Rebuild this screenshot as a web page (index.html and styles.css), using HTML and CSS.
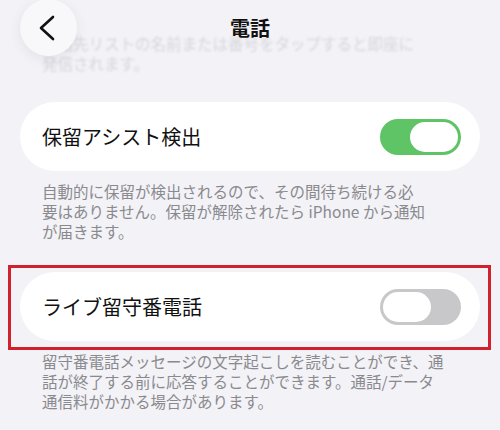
FILE: index.html
```html
<!DOCTYPE html>
<html lang="ja">
<head>
<meta charset="utf-8">
<link rel="stylesheet" href="styles.css">
</head>
<body>
<div class="screen">
  <header class="navbar">
    <button class="back" aria-label="戻る">
      <svg width="20" height="26" viewBox="0 0 20 26"><path d="M15 2 L3 13 L15 24" fill="none" stroke="#111" stroke-width="2.6" stroke-linecap="round" stroke-linejoin="round"/></svg>
    </button>
    <h1 class="title">電話</h1>
  </header>

  <p class="footer faded">連絡先リストの名前または番号をタップすると即座に<br>発信されます。</p>

  <div class="card first">
    <span class="label">保留アシスト検出</span>
    <span class="toggle on"><span class="knob"></span></span>
  </div>
  <p class="footer">自動的に保留が検出されるので、その間待ち続ける必<br>要はありません。保留が解除されたら iPhone から通知<br>が届きます。</p>

  <div class="card second highlight">
    <span class="label">ライブ留守番電話</span>
    <span class="toggle off"><span class="knob"></span></span>
  </div>
  <p class="footer">留守番電話メッセージの文字起こしを読むことができ、通<br>話が終了する前に応答することができます。通話/データ<br>通信料がかかる場合があります。</p>
</div>
</body>
</html>
```

FILE: styles.css
```css
* { box-sizing: border-box; }
html, body {
  margin: 0;
  padding: 0;
  background: #f2f2f7;
}
body {
  width: 500px;
  height: 430px;
  overflow: hidden;
  font-family: "Noto Sans CJK JP", "Noto Sans", sans-serif;
}
.screen {
  position: relative;
  padding: 33px 20px 0 20px;
}
.navbar {
  position: absolute;
  top: 0;
  left: 0;
  right: 0;
  height: 56px;
  z-index: 2;
}
.back {
  position: absolute;
  left: 20px;
  top: -1px;
  width: 57px;
  height: 57px;
  border-radius: 50%;
  border: none;
  padding: 0;
  background: #f8f8fa;
  box-shadow: 0 3px 14px rgba(0, 0, 0, 0.07);
  display: flex;
  align-items: center;
  justify-content: center;
}
.back svg { margin-left: -2px; }
.title {
  margin: 0;
  text-align: center;
  font-size: 20px;
  line-height: 14px;
  padding-top: 21px;
  font-weight: 700;
  color: #111;
}
.footer {
  margin: 0;
  padding: 10px 0 0 22px;
  font-size: 15.5px;
  line-height: 20px;
  color: #8a8a8e;
  white-space: nowrap;
}
.faded {
  padding-top: 0;
  color: #d6d6db;
  filter: blur(0.8px);
}
.card {
  height: 69px;
  border-radius: 35px;
  background: #fff;
  display: flex;
  align-items: center;
  justify-content: space-between;
  padding: 0 19px 0 22px;
}
.card.first { margin-top: 29px; }
.card.second { margin-top: 31px; }
.label {
  font-size: 20px;
  color: #111;
  line-height: 24px;
}
.toggle {
  position: relative;
  width: 81px;
  height: 36px;
  border-radius: 18px;
  display: block;
}
.toggle.on { background: #5fc466; }
.toggle.off { background: #c8c8ca; }
.knob {
  position: absolute;
  top: 3px;
  width: 48px;
  height: 30px;
  border-radius: 15px;
  background: #fff;
}
.toggle.on .knob { right: 3px; }
.toggle.off .knob { left: 3px; }
.highlight { position: relative; }
.highlight::after {
  content: "";
  position: absolute;
  left: -12px;
  right: -11px;
  top: -7px;
  bottom: -9px;
  border: 3px solid #d2212e;
  pointer-events: none;
}
```
